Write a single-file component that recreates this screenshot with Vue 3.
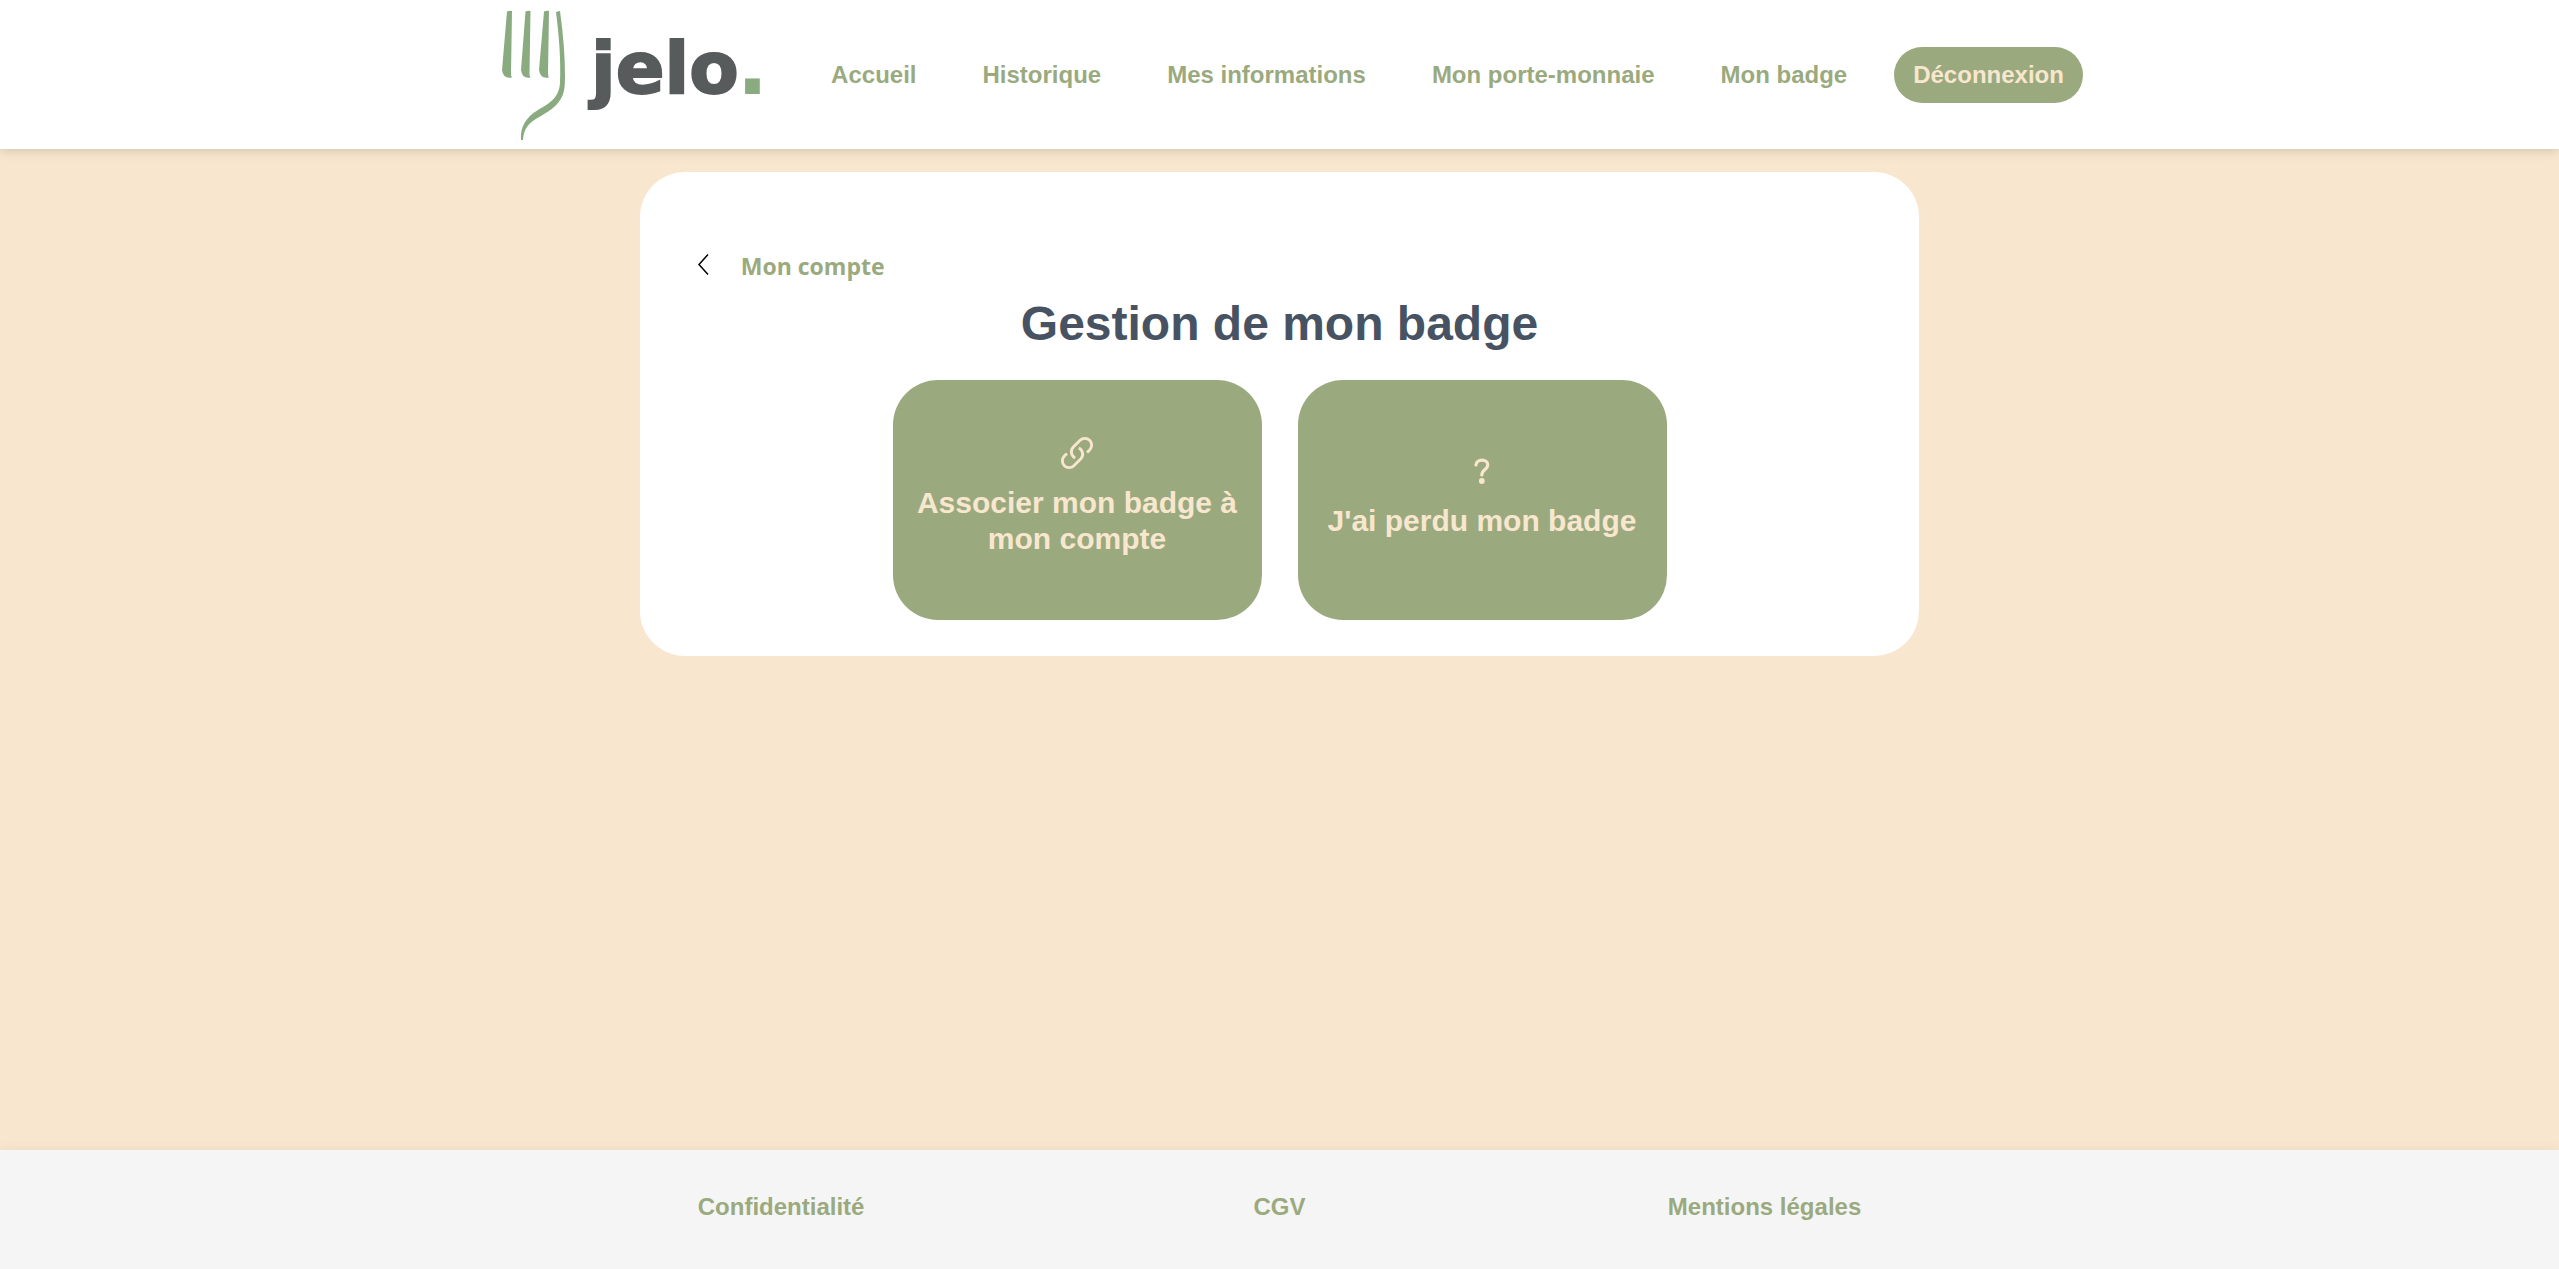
<template>
  <div class="page">
    <header class="header">
      <a href="#" class="logo" aria-label="jelo">
        <svg width="280" height="132" viewBox="0 0 280 132">
          <g fill="#8aab80">
            <path d="M7 2.500Q9.500 1.500 12 2L11 65Q11 67.500 12 68.500Q3 70 2 61Z" />
            <path d="M25.500 2.500Q28 1.500 30.500 2L29.500 65Q29.500 67.500 30.500 68.500Q22 70 21 61Z" />
            <path d="M44 2.500Q46.500 1.500 49 2L48 65Q48 67.500 49 68.500Q40 70 39 61Z" />
            <path d="M56 3L60 2Q65 38 65 67C65 84 64 94 41 107C28 114 24 119 23 131L21 131C20 118 26 108 38 101C54 92 59 86 60 74C61 50 59 27 56 3Z" />
          </g>
          <text x="91" y="84" class="logo-text">jelo<tspan class="logo-dot">.</tspan></text>
        </svg>
      </a>
      <nav class="nav">
        <a v-for="link in navLinks" :key="link" href="#" class="nav-link">{{ link }}</a>
        <button type="button" class="logout">Déconnexion</button>
      </nav>
    </header>

    <main class="content">
      <section class="card">
        <a href="#" class="back">
          <svg width="20" height="24" viewBox="0 0 20 24" fill="none" stroke="#000" stroke-width="1.500">
            <path d="M10 0.500L1 10.500L10 20.500" />
          </svg>
          <span>Mon compte</span>
        </a>
        <h1>Gestion de mon badge</h1>
        <div class="tiles">
          <button v-for="tile in tiles" :key="tile.label" type="button" class="tile">
            <svg v-if="tile.icon === 'link'" class="icon" viewBox="0 0 24 24" stroke-width="1.900">
              <path d="M13.190 8.688a4.500 4.500 0 0 1 1.242 7.244l-4.500 4.500a4.500 4.500 0 0 1-6.364-6.364l1.757-1.757m13.350-.622 1.757-1.757a4.500 4.500 0 0 0-6.364-6.364l-4.500 4.500a4.500 4.500 0 0 0 1.242 7.244" />
            </svg>
            <svg v-else class="icon" viewBox="0 0 36 36" stroke-width="3.200">
              <path d="M12 12C12.300 5.500 23.800 5.500 23.800 12C23.800 16.500 17.800 16.500 17.800 22" stroke-linecap="round" />
              <circle cx="17.800" cy="28" r="2.900" fill="currentColor" stroke="none" />
            </svg>
            <span>{{ tile.label }}</span>
          </button>
        </div>
      </section>
    </main>

    <footer class="footer">
      <div class="footer-links">
        <a v-for="link in footerLinks" :key="link" href="#">{{ link }}</a>
      </div>
    </footer>
  </div>
</template>

<script setup>
const navLinks = ['Accueil', 'Historique', 'Mes informations', 'Mon porte-monnaie', 'Mon badge']

const tiles = [
  { icon: 'link', label: 'Associer mon badge à mon compte' },
  { icon: 'question', label: "J'ai perdu mon badge" }
]

const footerLinks = ['Confidentialité', 'CGV', 'Mentions légales']
</script>

<style>
body {
  margin: 0;
  background: #f8e7ce;
}
</style>

<style scoped>
.page {
  display: flex;
  flex-direction: column;
  min-height: 100vh;
  font-family: Arial, "Liberation Sans", sans-serif;
  font-size: 24px;
  font-weight: bold;
  color: #9aaa7e;
}
a {
  color: inherit;
  text-decoration: none;
}
button {
  border: none;
  font: inherit;
  background: #9aaa7e;
  color: #f8e7ce;
  cursor: pointer;
}

/* Header */
.header {
  display: flex;
  justify-content: center;
  align-items: center;
  gap: 32px;
  box-sizing: border-box;
  min-height: 149px;
  padding-left: 24px;
  background: #fff;
  box-shadow: 0 0 12px rgba(0, 0, 0, 0.2);
}
.logo svg {
  display: block;
}
.logo-text {
  font-family: "DejaVu Sans", sans-serif;
  font-size: 72px;
  font-weight: bold;
  fill: #575b5c;
  stroke: #575b5c;
  stroke-width: 2px;
}
.logo-dot {
  fill: #8aab80;
  stroke: #8aab80;
}
.nav {
  display: flex;
  align-items: center;
  gap: 28px;
}
.nav-link,
.logout {
  padding: 14px 19px;
  line-height: 28px;
}
.logout {
  border-radius: 28px;
}

/* Card */
.content {
  flex: 1;
  padding: 23px 0;
}
.card {
  box-sizing: border-box;
  width: 50%;
  margin: 0 auto;
  padding: 76px 58px 36px;
  border-radius: 45px;
  background: #fff;
}
.back {
  display: inline-flex;
  align-items: center;
  gap: 23px;
  font-family: "Segoe UI", "Open Sans", sans-serif;
  font-size: 23px;
  line-height: 36px;
}
h1 {
  margin: 12px 0 28px;
  font-size: 48px;
  line-height: 56px;
  text-align: center;
  color: #475363;
}
.tiles {
  display: flex;
  justify-content: center;
  gap: 36px;
}
.tile {
  display: flex;
  flex-direction: column;
  align-items: center;
  justify-content: center;
  gap: 14px;
  width: 369px;
  height: 240px;
  padding: 0 20px 8px;
  border-radius: 45px;
  font-size: 30px;
  line-height: 36px;
}
.icon {
  width: 36px;
  height: 36px;
  fill: none;
  stroke: currentColor;
}

/* Footer */
.footer {
  padding: 42px 0 47px;
  background: #f5f5f5;
  box-shadow: 0 0 12px rgba(0, 0, 0, 0.06);
}
.footer-links {
  display: grid;
  grid-template-columns: repeat(3, 1fr);
  box-sizing: border-box;
  width: 50%;
  margin: 0 auto;
  padding: 0 58px;
  line-height: 30px;
  text-align: center;
}
.footer-links a:first-child {
  text-align: left;
}
.footer-links a:last-child {
  text-align: right;
}
</style>
